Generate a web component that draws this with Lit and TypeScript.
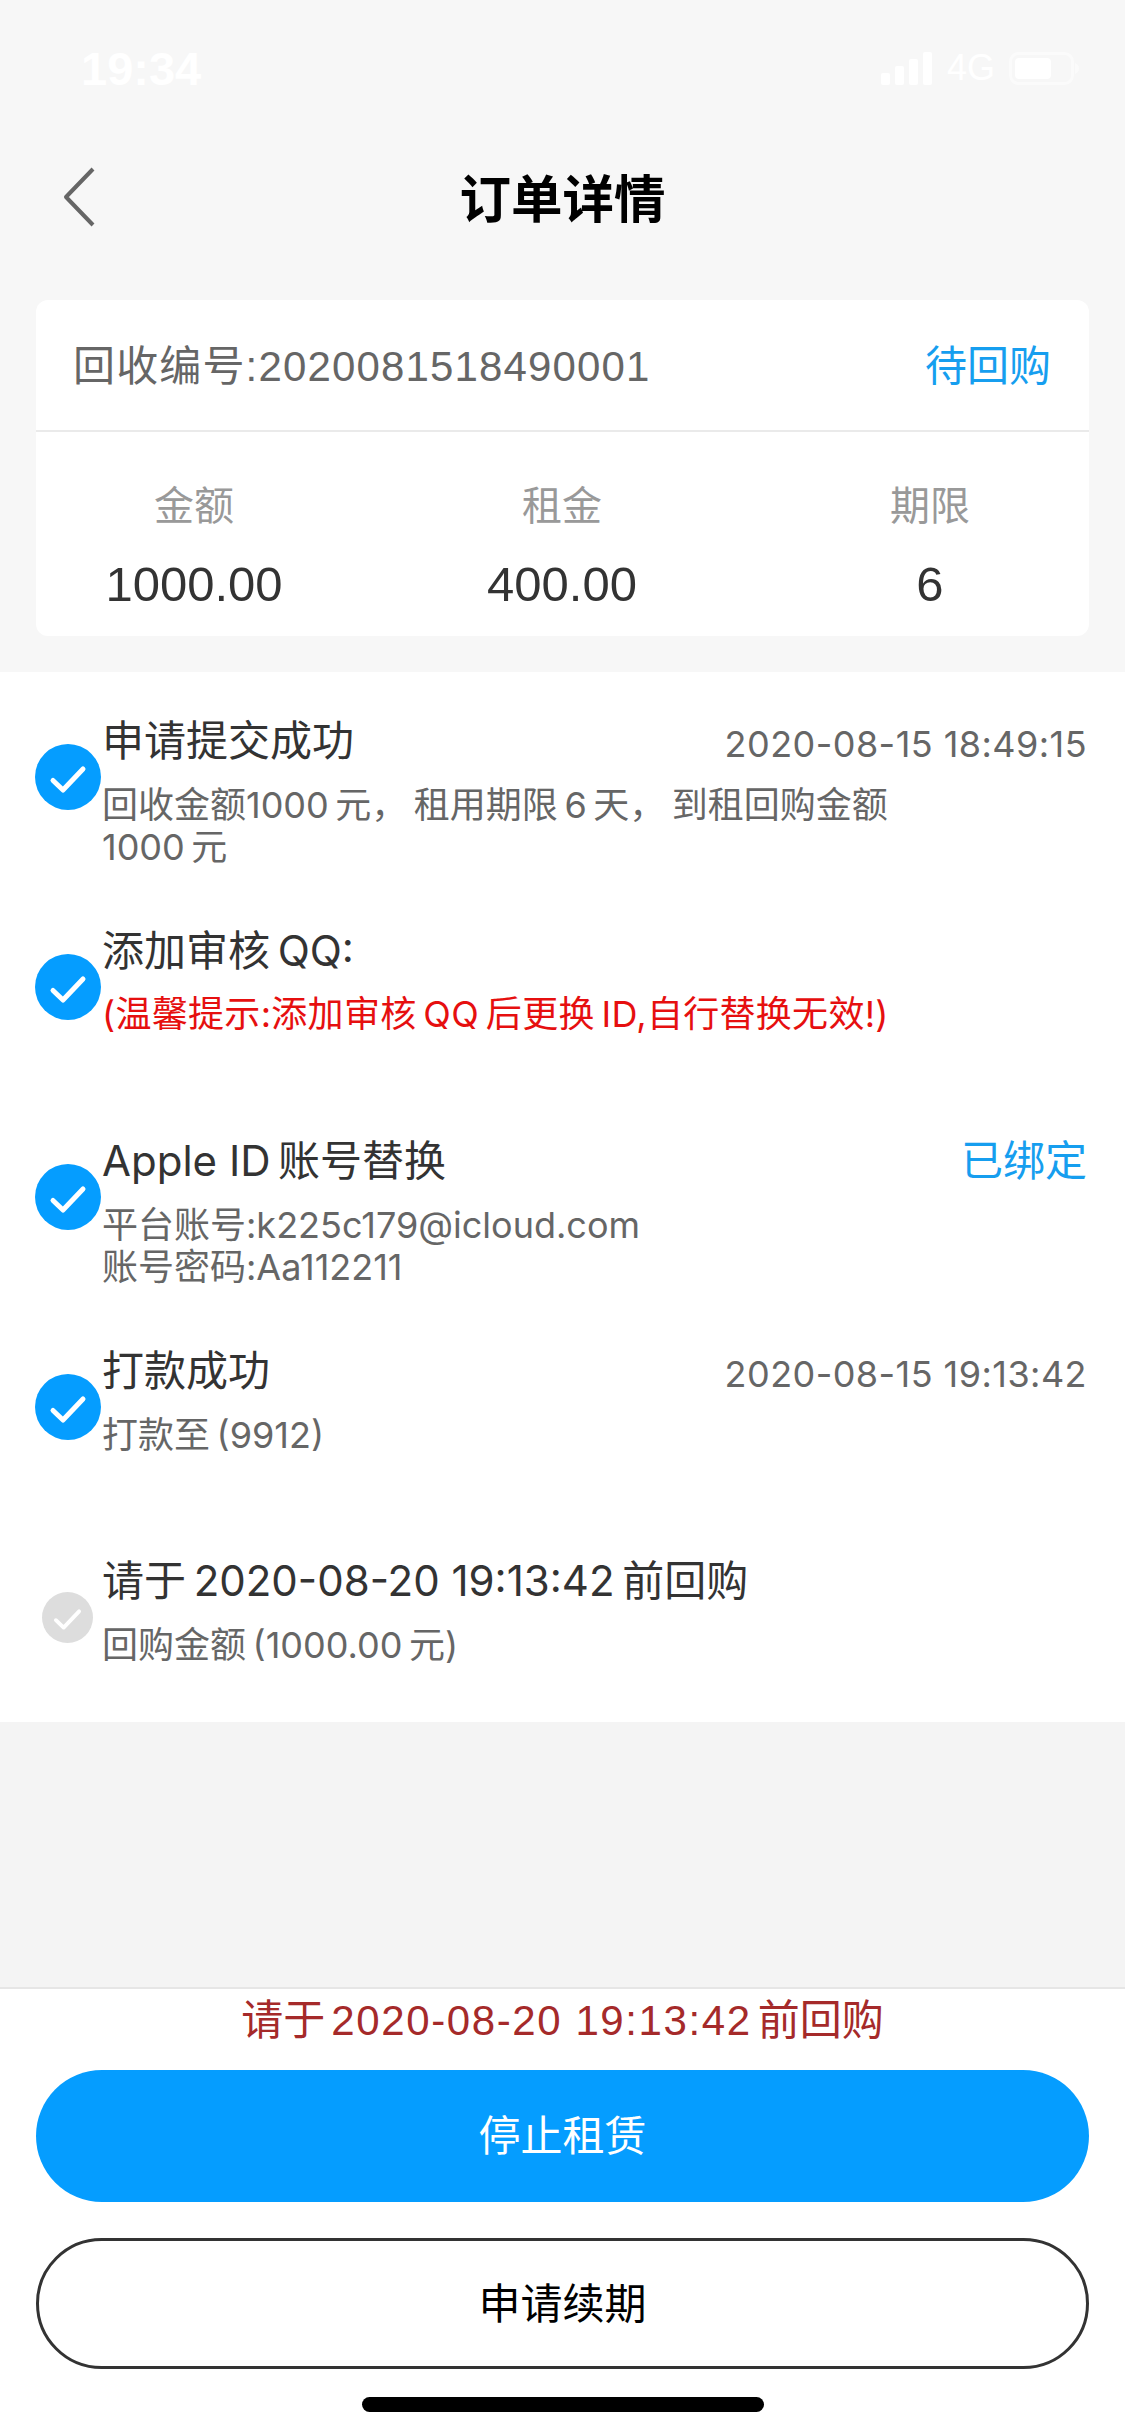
import { LitElement, html, css, svg } from 'lit';
import { customElement } from 'lit/decorators.js';

interface Step {
  title: string;
  lines: string[];
  aside?: string;
  asideLink?: boolean;
  warn?: boolean;
  pending?: boolean;
}

const STEPS: Step[] = [
  {
    title: '申请提交成功',
    lines: ['回收金额1000\u2009元，\u2009租用期限\u20096\u2009天，\u2009到租回购金额 1000\u2009元'],
    aside: '2020-08-15 18:49:15',
  },
  {
    title: '添加审核\u2009QQ:',
    lines: ['(温馨提示:添加审核\u2009QQ\u2009后更换\u2009ID,自行替换无效!)'],
    warn: true,
  },
  {
    title: 'Apple ID\u2009账号替换',
    lines: ['平台账号:k225c179@icloud.com', '账号密码:Aa112211'],
    aside: '已绑定',
    asideLink: true,
  },
  {
    title: '打款成功',
    lines: ['打款至\u2009(9912)'],
    aside: '2020-08-15 19:13:42',
  },
  {
    title: '请于\u20092020-08-20 19:13:42\u2009前回购',
    lines: ['回购金额\u2009(1000.00\u2009元)'],
    pending: true,
  },
];

const STATS = [
  { label: '金额', value: '1000.00' },
  { label: '租金', value: '400.00' },
  { label: '期限', value: '6' },
];

const checkIcon = (pending?: boolean) => html`
  <svg class=${pending ? 'check small' : 'check'} viewBox="0 0 66 66">
    <circle cx="33" cy="33" r="33" fill=${pending ? '#dddddd' : '#059dff'}></circle>
    ${svg`<path d="M18 36.5 L28 46 L48 25" fill="none" stroke="#fff" stroke-width="5" stroke-linecap="round" stroke-linejoin="round"></path>`}
  </svg>
`;

@customElement('app-root')
export class AppRoot extends LitElement {
  static styles = css`
    :host {
      display: block;
      width: 1125px;
      font-family: 'Liberation Sans', 'Noto Sans CJK SC', sans-serif;
      color: #333;
    }

    .page {
      display: flex;
      flex-direction: column;
      min-height: 2436px;
      background: #f4f4f4;
    }

    .top {
      background: #f7f7f7;
      padding-bottom: 36px;
    }

    .status {
      height: 136px;
      display: flex;
      align-items: center;
      justify-content: space-between;
      padding: 0 45px 0 81px;
      color: #fff;
    }

    .time {
      font-size: 47px;
      font-weight: 700;
      line-height: 1;
    }

    .status-icons {
      display: flex;
      align-items: center;
      gap: 14px;
      font-size: 36px;
    }

    .nav {
      height: 122px;
      display: flex;
      align-items: center;
      justify-content: center;
      position: relative;
      font-size: 51.5px;
      font-weight: 700;
      color: #000;
      margin-bottom: 42px;
    }

    .nav-title {
      margin-top: -4px;
    }

    .back {
      position: absolute;
      left: 63px;
      top: 31px;
      width: 32px;
      height: 60px;
    }

    .card {
      margin: 0 36px;
      background: #fff;
      border-radius: 12px;
    }

    .card-head {
      height: 132px;
      box-sizing: border-box;
      display: flex;
      align-items: center;
      justify-content: space-between;
      padding: 4px 38px 0 37px;
      border-bottom: 2px solid #eaeaea;
      font-size: 42px;
      line-height: 50px;
      color: #666;
    }

    .card-no {
      letter-spacing: 1.15px;
    }

    .blue {
      color: #169eef;
    }

    .stats {
      height: 204px;
      display: flex;
      justify-content: space-between;
      padding: 0 69px 0 68px;
    }

    .stat {
      width: 180px;
      text-align: center;
    }

    .stat-label {
      margin-top: 50px;
      font-size: 40px;
      line-height: 48px;
      color: #999;
    }

    .stat-value {
      margin-top: 26px;
      font-size: 49px;
      line-height: 56px;
      color: #333;
    }

    .steps {
      background: #fff;
    }

    .step {
      height: 210px;
      box-sizing: border-box;
      display: flex;
      padding: 44px 38px 0 35px;
      font-family: 'Inter', 'Noto Sans CJK SC', sans-serif;
    }

    .check-slot {
      flex: 0 0 67px;
      height: 122px;
      display: flex;
      align-items: center;
    }

    .check {
      width: 66px;
      height: 66px;
      display: block;
    }

    .check.small {
      width: 51px;
      height: 51px;
      margin-left: 7px;
    }

    .step-body {
      flex: 1;
      min-width: 0;
    }

    .step-head {
      display: flex;
      justify-content: space-between;
      align-items: center;
      height: 50px;
      font-size: 42px;
      line-height: 50px;
      color: #333;
    }

    .aside {
      padding-top: 6px;
      font-size: 36px;
      line-height: 44px;
      color: #666;
      letter-spacing: 0.45px;
    }

    .aside.blue {
      padding-top: 0;
      font-size: 42px;
      line-height: 50px;
      color: #169eef;
      letter-spacing: 0;
    }

    .step-lines {
      margin-top: 18px;
      max-width: 800px;
      font-size: 36px;
      line-height: 42px;
      color: #666;
    }

    .step-lines.warn {
      margin-top: 17px;
      color: #e60f0f;
      letter-spacing: 0.3px;
    }

    .filler {
      flex: 1;
    }

    .footer {
      background: #fff;
      border-top: 2px solid #e6e6e6;
      padding: 0 36px 24px;
      display: flex;
      flex-direction: column;
      align-items: stretch;
    }

    .deadline {
      height: 64px;
      margin-bottom: 17px;
      display: flex;
      align-items: center;
      justify-content: center;
      font-size: 42px;
      line-height: 50px;
      color: #a52a2a;
    }

    .deadline span {
      margin: 0 6px;
      letter-spacing: 1.6px;
    }

    .btn {
      height: 132px;
      box-sizing: border-box;
      border-radius: 66px;
      display: flex;
      align-items: center;
      justify-content: center;
      padding-top: 2px;
      font-size: 42px;
      line-height: 50px;
    }

    .btn.primary {
      background: #059dff;
      color: #fff;
      margin-bottom: 36px;
    }

    .btn.outline {
      height: 131px;
      border: 3px solid #333;
      color: #000;
    }

    .home-bar {
      align-self: center;
      width: 402px;
      height: 15px;
      margin-top: 28px;
      border-radius: 8px;
      background: #000;
    }
  `;

  private renderStatusIcons() {
    return html`
      <div class="status-icons">
        <svg width="52" height="33" viewBox="0 0 52 33" fill="#fff">
          <rect x="0" y="21" width="9" height="12" rx="2"></rect>
          <rect x="14" y="14" width="9" height="19" rx="2"></rect>
          <rect x="28" y="7" width="9" height="26" rx="2"></rect>
          <rect x="42" y="0" width="9" height="33" rx="2"></rect>
        </svg>
        <span>4G</span>
        <svg width="71" height="33" viewBox="0 0 71 33">
          <rect x="1.5" y="1.5" width="62" height="30" rx="8" fill="none" stroke="#fff" stroke-opacity="0.5" stroke-width="3"></rect>
          <rect x="6" y="6" width="36" height="21" rx="4" fill="#fff"></rect>
          <path d="M66 11 C69 12 70 14 70 16.5 C70 19 69 21 66 22 Z" fill="#fff" fill-opacity="0.5"></path>
        </svg>
      </div>
    `;
  }

  private renderStep(step: Step) {
    return html`
      <div class="step">
        <div class="check-slot">${checkIcon(step.pending)}</div>
        <div class="step-body">
          <div class="step-head">
            <span>${step.title}</span>
            ${step.aside
              ? html`<span class=${step.asideLink ? 'aside blue' : 'aside'}>${step.aside}</span>`
              : ''}
          </div>
          <div class=${step.warn ? 'step-lines warn' : 'step-lines'}>
            ${step.lines.map((line) => html`<div>${line}</div>`)}
          </div>
        </div>
      </div>
    `;
  }

  render() {
    return html`
      <div class="page">
        <div class="top">
          <div class="status">
            <span class="time">19:34</span>
            ${this.renderStatusIcons()}
          </div>
          <div class="nav">
            <svg class="back" viewBox="0 0 32 60">
              <path d="M30 2 L3 30 L30 58" fill="none" stroke="#666" stroke-width="4" stroke-linejoin="round"></path>
            </svg>
            <div class="nav-title">订单详情</div>
          </div>
          <div class="card">
            <div class="card-head">
              <span class="card-no">回收编号:2020081518490001</span>
              <span class="blue">待回购</span>
            </div>
            <div class="stats">
              ${STATS.map(
                (stat) => html`
                  <div class="stat">
                    <div class="stat-label">${stat.label}</div>
                    <div class="stat-value">${stat.value}</div>
                  </div>
                `
              )}
            </div>
          </div>
        </div>

        <div class="steps">${STEPS.map((step) => this.renderStep(step))}</div>

        <div class="filler"></div>

        <div class="footer">
          <div class="deadline">请于<span>2020-08-20 19:13:42</span>前回购</div>
          <div class="btn primary">停止租赁</div>
          <div class="btn outline">申请续期</div>
          <div class="home-bar"></div>
        </div>
      </div>
    `;
  }
}
